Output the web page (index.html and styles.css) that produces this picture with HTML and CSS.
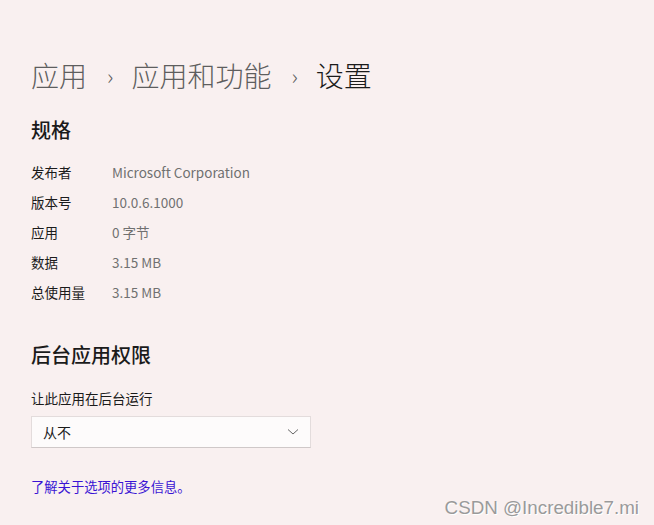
FILE: index.html
```html
<!DOCTYPE html>
<html lang="zh-CN">
<head>
  <meta charset="UTF-8">
  <title>设置</title>
  <link rel="stylesheet" href="styles.css">
</head>
<body>
  <div class="page">
    <!-- Breadcrumb -->
    <div class="crumbs">
      <span class="crumb">应用</span>
      <span class="sep">›</span>
      <span class="crumb">应用和功能</span>
      <span class="sep">›</span>
      <span class="crumb current">设置</span>
    </div>

    <!-- Specs -->
    <h2 class="section-title">规格</h2>
    <div class="specs">
      <div class="spec-row"><span class="spec-label">发布者</span><span class="spec-value">Microsoft Corporation</span></div>
      <div class="spec-row"><span class="spec-label">版本号</span><span class="spec-value">10.0.6.1000</span></div>
      <div class="spec-row"><span class="spec-label">应用</span><span class="spec-value">0 字节</span></div>
      <div class="spec-row"><span class="spec-label">数据</span><span class="spec-value">3.15 MB</span></div>
      <div class="spec-row"><span class="spec-label">总使用量</span><span class="spec-value">3.15 MB</span></div>
    </div>

    <!-- Background permissions -->
    <h2 class="section-title bg-title">后台应用权限</h2>
    <div class="field-label">让此应用在后台运行</div>
    <div class="select">
      <span>从不</span>
      <svg width="12" height="8" viewBox="0 0 12 8"><path d="M1 1.5 L6 6 L11 1.5" fill="none" stroke="#666" stroke-width="1"/></svg>
    </div>

    <a href="#" class="more-link">了解关于选项的更多信息。</a>
  </div>

  <div class="watermark">CSDN @Incredible7.mi</div>
</body>
</html>
```

FILE: styles.css
```css
/* Basic Styles */
body {
  margin: 0;
  padding: 0;
  background-color: #f9f0f0;
  font-family: "Segoe UI", "Noto Sans CJK SC", "Noto Sans", sans-serif;
  color: #1b1b1b;
  height: 525px;
  overflow: hidden;
  position: relative;
}

.page {
  padding: 56px 0 0 31px;
}

/* Breadcrumb */
.crumbs {
  display: flex;
  align-items: center;
  font-size: 28px;
  font-weight: 300;
  line-height: 38px;
  color: #5e5e5e;
}

.sep {
  font-size: 22px;
  margin: 0 18px 0 20px;
  color: #5e5e5e;
}

.crumb.current {
  color: #1b1b1b;
}

/* Sections */
.section-title {
  font-size: 20px;
  font-weight: 500;
  line-height: 28px;
  margin: 22px 0 0 0;
}

.specs {
  margin-top: 13px;
}

.spec-row {
  display: flex;
  font-size: 13.5px;
  line-height: 30px;
}

.spec-label {
  width: 81px;
}

.spec-value {
  color: #707070;
}

.bg-title {
  margin-top: 34px;
}

.field-label {
  font-size: 13.5px;
  line-height: 20px;
  margin-top: 19px;
}

.select {
  display: flex;
  justify-content: space-between;
  align-items: center;
  box-sizing: border-box;
  width: 280px;
  height: 32px;
  margin-top: 8px;
  padding: 0 11px 0 11px;
  background-color: #fdfbfb;
  border: 1px solid #e3dcdc;
  border-bottom-color: #cfc8c8;
  font-size: 14px;
}

.more-link {
  display: inline-block;
  margin-top: 29px;
  font-size: 13.3px;
  color: #3a14d4;
  text-decoration: none;
}

/* Watermark overlay */
.watermark {
  position: absolute;
  right: 15px;
  bottom: 6px;
  font-family: "Liberation Sans", Arial, sans-serif;
  font-size: 18.8px;
  color: #9a9a9a;
  text-shadow: 1px 1px 0 #fff;
}
```
